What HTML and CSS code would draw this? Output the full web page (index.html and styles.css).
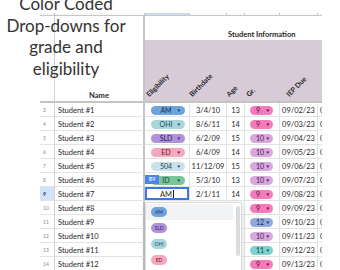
FILE: index.html
```html
<!DOCTYPE html>
<html lang="en">
<head>
    <meta charset="UTF-8">
    <title>Student Information</title>
    <link rel="stylesheet" href="styles.css">
</head>
<body>
    <div class="sheet">
        <div class="row colhead">
            <div class="cell"></div><div class="cell"></div><div class="cell picked"></div><div class="cell"></div>
            <div class="cell"></div><div class="cell"></div><div class="cell"></div><div class="cell"></div>
        </div>
        <div class="row title-row">
            <div class="cell num"></div>
            <div class="cell name"></div>
            <div class="cell group">Student Information</div>
        </div>
        <div class="row head-row">
            <div class="cell num"></div>
            <div class="cell name namehead">Name</div>
            <div class="cell rot elig-h"><span>Eligibility</span></div>
            <div class="cell rot birth-h"><span>Birthdate</span></div>
            <div class="cell rot age-h"><span>Age</span></div>
            <div class="cell rot gr-h"><span>Gr.</span></div>
            <div class="cell rot iep-h"><span>IEP Due</span></div>
            <div class="cell rot"></div>
        </div>

        <div class="row">
            <div class="cell num">3</div><div class="cell name">Student #1</div>
            <div class="cell"><span class="chip am">AM<i>▼</i></span></div>
            <div class="cell mid">3/4/10</div><div class="cell mid">13</div>
            <div class="cell"><span class="pill g9">9<i>▼</i></span></div>
            <div class="cell mid">09/02/23</div><div class="cell more">0</div>
        </div>
        <div class="row">
            <div class="cell num">4</div><div class="cell name">Student #2</div>
            <div class="cell"><span class="chip ohi">OHI<i>▼</i></span></div>
            <div class="cell mid">8/6/11</div><div class="cell mid">14</div>
            <div class="cell"><span class="pill g9">9<i>▼</i></span></div>
            <div class="cell mid">09/03/23</div><div class="cell more">0</div>
        </div>
        <div class="row">
            <div class="cell num">5</div><div class="cell name">Student #3</div>
            <div class="cell"><span class="chip sld">SLD<i>▼</i></span></div>
            <div class="cell mid">6/2/09</div><div class="cell mid">15</div>
            <div class="cell"><span class="pill g10">10<i>▼</i></span></div>
            <div class="cell mid">09/04/23</div><div class="cell more">0</div>
        </div>
        <div class="row">
            <div class="cell num">6</div><div class="cell name">Student #4</div>
            <div class="cell"><span class="chip ed">ED<i>▼</i></span></div>
            <div class="cell mid">6/4/09</div><div class="cell mid">14</div>
            <div class="cell"><span class="pill g10">10<i>▼</i></span></div>
            <div class="cell mid">09/05/23</div><div class="cell more">0</div>
        </div>
        <div class="row">
            <div class="cell num">7</div><div class="cell name">Student #5</div>
            <div class="cell"><span class="chip s504">504<i>▼</i></span></div>
            <div class="cell mid">11/12/09</div><div class="cell mid">15</div>
            <div class="cell"><span class="pill g10">10<i>▼</i></span></div>
            <div class="cell mid">09/06/23</div><div class="cell more">0</div>
        </div>
        <div class="row">
            <div class="cell num">8</div><div class="cell name">Student #6</div>
            <div class="cell"><span class="chip id">ID<i>▼</i></span></div>
            <div class="cell mid">5/3/10</div><div class="cell mid">13</div>
            <div class="cell"><span class="pill g10">10<i>▼</i></span></div>
            <div class="cell mid">09/07/23</div><div class="cell more">0</div>
        </div>
        <div class="row">
            <div class="cell num current">9</div><div class="cell name">Student #7</div>
            <div class="cell editing">AM<b class="caret"></b></div>
            <div class="cell mid">2/1/11</div><div class="cell mid">14</div>
            <div class="cell"><span class="pill g9">9<i>▼</i></span></div>
            <div class="cell mid">09/08/23</div><div class="cell more">0</div>
        </div>
        <div class="row">
            <div class="cell num">10</div><div class="cell name">Student #8</div>
            <div class="cell"></div><div class="cell mid"></div><div class="cell mid"></div>
            <div class="cell"><span class="pill g9">9<i>▼</i></span></div>
            <div class="cell mid">09/09/23</div><div class="cell more">0</div>
        </div>
        <div class="row">
            <div class="cell num">11</div><div class="cell name">Student #9</div>
            <div class="cell"></div><div class="cell mid"></div><div class="cell mid"></div>
            <div class="cell"><span class="pill g12">12<i>▼</i></span></div>
            <div class="cell mid">09/10/23</div><div class="cell more">0</div>
        </div>
        <div class="row">
            <div class="cell num">12</div><div class="cell name">Student #10</div>
            <div class="cell"></div><div class="cell mid"></div><div class="cell mid"></div>
            <div class="cell"><span class="pill g10">10<i>▼</i></span></div>
            <div class="cell mid">09/11/23</div><div class="cell more">0</div>
        </div>
        <div class="row">
            <div class="cell num">13</div><div class="cell name">Student #11</div>
            <div class="cell"></div><div class="cell mid"></div><div class="cell mid"></div>
            <div class="cell"><span class="pill g11">11<i>▼</i></span></div>
            <div class="cell mid">09/12/23</div><div class="cell more">0</div>
        </div>
        <div class="row">
            <div class="cell num">14</div><div class="cell name">Student #12</div>
            <div class="cell"></div><div class="cell mid"></div><div class="cell mid"></div>
            <div class="cell"><span class="pill g9">9<i>▼</i></span></div>
            <div class="cell mid">09/13/23</div><div class="cell more">0</div>
        </div>
    </div>

    <!-- overlays -->
    <div class="headline">Color Coded Drop-downs for grade and eligibility</div>
    <div class="cellref">B9</div>
    <div class="dropdown">
        <div class="opt hover"><span class="mini am">AM</span></div>
        <div class="opt"><span class="mini sld">SLD</span></div>
        <div class="opt"><span class="mini ohi">OHI</span></div>
        <div class="opt"><span class="mini ed">ED</span></div>
        <div class="opt"><span class="mini s504">504</span></div>
        <div class="scroll"></div>
    </div>
</body>
</html>
```

FILE: styles.css
```css
* {
    box-sizing: border-box;
}

body {
    margin: 0;
    width: 340px;
    height: 270px;
    overflow: hidden;
    background: #ffffff;
    position: relative;
    font-family: Lato, "Liberation Sans", sans-serif;
    color: #1f1f1f;
}

.sheet {
    --cols: 15px 90px 45px 37px 18px 35px 38px 30px;
    margin: 13px 0 0 40px;
    width: 282px;
    overflow: hidden;
}

.row {
    display: grid;
    grid-template-columns: var(--cols);
    height: 14px;
}

.cell {
    display: flex;
    align-items: center;
    padding-top: 1px;
    border-right: 1px solid #e2e3e3;
    border-bottom: 1px solid #e2e3e3;
    font-size: 7.5px;
    white-space: nowrap;
    overflow: hidden;
}

.mid {
    justify-content: center;
}

.more {
    padding-left: 2px;
}

/* column letters strip */
.colhead {
    height: 3px;
}

.colhead .cell {
    background: #f8f9fa;
    border-right-color: #c4c7c5;
    border-bottom-color: #c4c7c5;
}

.colhead .cell.picked {
    background: #c9dbf9;
}

.num {
    font-size: 5px;
    color: #8a8a8a;
    padding-left: 3px;
    border-right-color: #d0d0d0;
}

.num.current {
    background: #d3e3fd;
    color: #0b2f6b;
    font-weight: bold;
}

.name {
    padding-left: 3px;
    border-right: 2px solid #c4c4c4;
}

/* row 1 */
.title-row {
    height: 24px;
}

.title-row .cell {
    border-bottom: none;
}

.group {
    grid-column: 3 / -1;
    border-right: none;
    align-items: flex-end;
    padding: 0 0 1px 83px;
    font-size: 7.5px;
    font-weight: bold;
}

/* row 2 */
.head-row {
    height: 63px;
}

.head-row .cell {
    border-bottom: 2px solid #c4c4c4;
}

.namehead {
    justify-content: center;
    align-items: flex-end;
    padding: 0 0 1px 0;
    font-weight: bold;
}

.rot {
    background: #d8cbd8;
    border-right: none;
    align-items: flex-end;
    overflow: visible;
    padding-bottom: 3px;
}

.rot span {
    display: block;
    font-weight: bold;
    font-size: 7px;
    transform-origin: left bottom;
    transform: rotate(-45deg);
}

.elig-h { padding-left: 5px; }
.birth-h { padding-left: 3px; }
.age-h { padding-left: 3px; }
.gr-h { padding-left: 5px; }
.iep-h { padding-left: 10px; }

/* dropdown chips */
.chip,
.pill {
    display: flex;
    align-items: center;
    height: 9px;
    border-radius: 5px;
    font-size: 7px;
    line-height: 9px;
}

.chip {
    width: 34px;
    margin-left: 6px;
    padding: 0 4px 0 0;
    justify-content: center;
    position: relative;
}

.chip i,
.pill i {
    font-style: normal;
    font-size: 4.5px;
}

.chip i {
    position: absolute;
    right: 4px;
}

.pill {
    width: 23px;
    margin-left: 5px;
    padding: 0 3px 0 6px;
    justify-content: space-between;
}

.am { background: #6fa3dc; color: #0d3566; }
.ohi { background: #a9d6de; color: #1d4d57; }
.sld { background: #ae93d8; color: #361c63; }
.ed { background: #f2a8bd; color: #6a1230; }
.s504 { background: #c8e1ea; color: #1e4757; }
.id { background: #7cc49c; color: #0f4728; }

.g9 { background: #f47bbb; color: #5a0a33; }
.g10 { background: #d8a7dc; color: #4a1a4f; }
.g11 { background: #80d1cd; color: #0d4a47; }
.g12 { background: #91aadc; color: #1a2f5e; }

/* active cell */
.editing {
    justify-content: center;
    background: #ffffff;
    box-shadow: inset 0 0 0 2px #3b78e7;
    font-size: 7.5px;
    position: relative;
    z-index: 1;
}

.caret {
    display: inline-block;
    width: 1px;
    height: 8px;
    background: #1f1f1f;
    margin-left: 1px;
}

.headline {
    position: absolute;
    left: 0;
    top: -7px;
    width: 132px;
    text-align: center;
    font-family: Lato, sans-serif;
    font-size: 17px;
    line-height: 21.5px;
    color: #333333;
}

.cellref {
    position: absolute;
    left: 145px;
    top: 175px;
    width: 14px;
    height: 9px;
    background: #4a86e8;
    color: #ffffff;
    font-size: 5.5px;
    line-height: 9px;
    text-align: center;
    z-index: 2;
}

.dropdown {
    position: absolute;
    left: 145px;
    top: 202px;
    width: 97px;
    height: 80px;
    background: #ffffff;
    border: 1px solid #dadce0;
    border-radius: 2px;
    box-shadow: 0 2px 5px rgba(0, 0, 0, 0.18);
    padding-top: 1px;
    z-index: 3;
}

.opt {
    height: 16px;
    display: flex;
    align-items: center;
    padding-left: 5px;
}

.opt.hover {
    background: #f1f3f4;
    margin-right: 8px;
}

.mini {
    display: inline-block;
    width: 16px;
    height: 10px;
    border-radius: 5px;
    font-size: 5px;
    line-height: 10px;
    text-align: center;
}

.scroll {
    position: absolute;
    left: 90px;
    top: 3px;
    width: 4px;
    height: 50px;
    border-radius: 2px;
    background: #dadce0;
}
```
